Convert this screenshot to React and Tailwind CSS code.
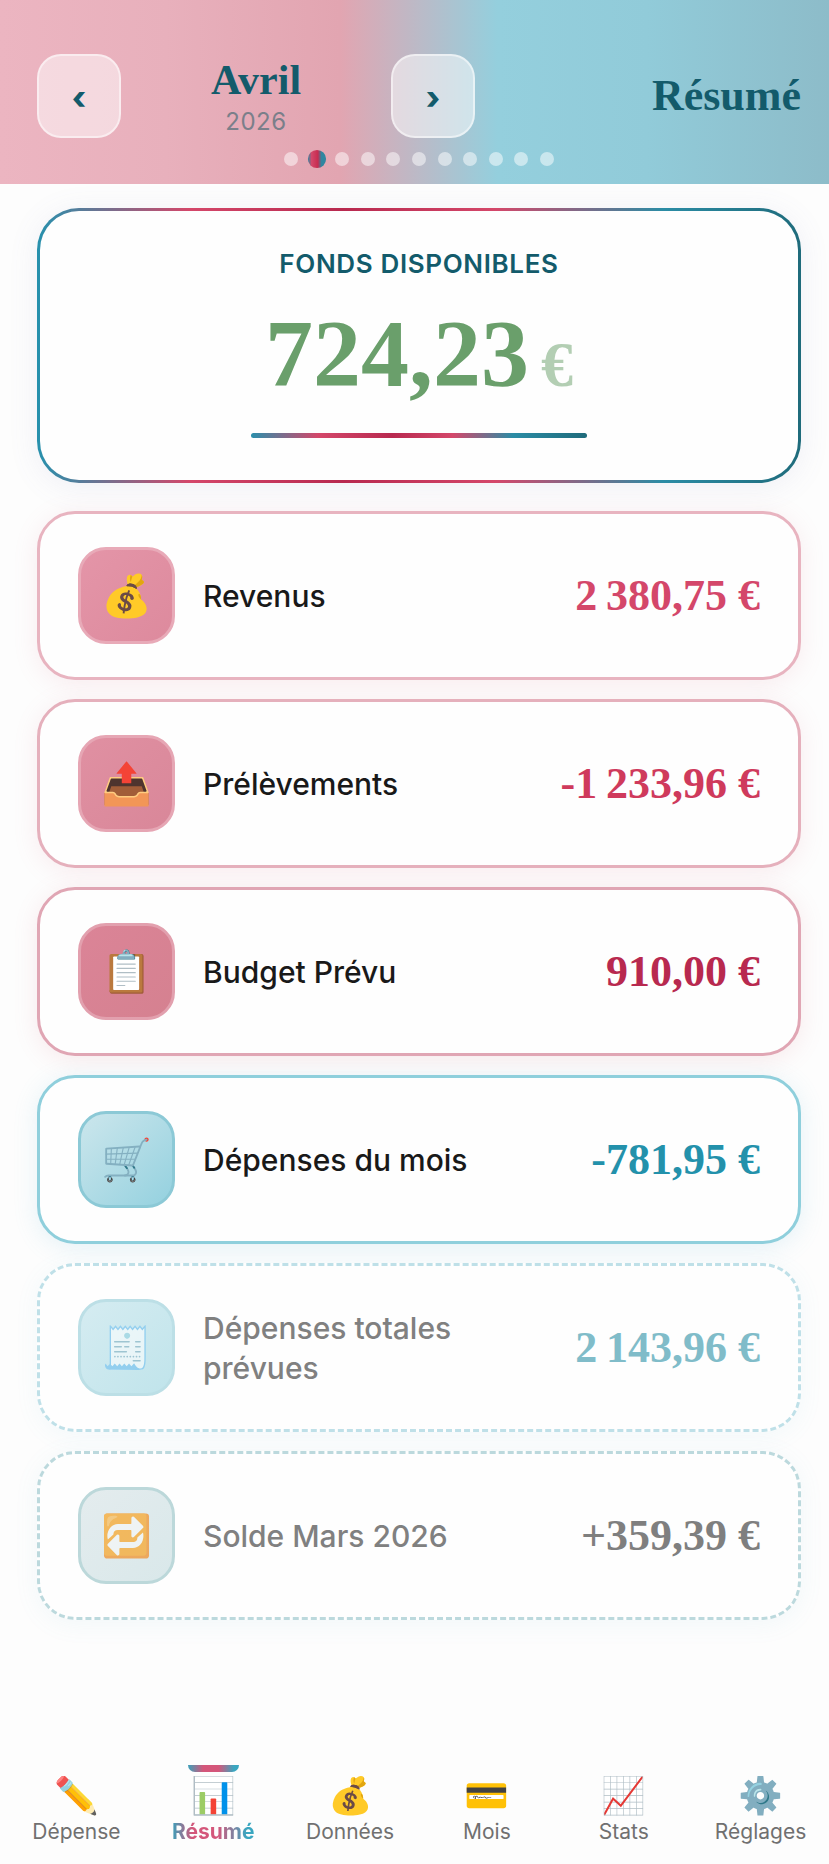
import clsx from 'clsx'

const rows = [
  {
    icon: '💰',
    label: 'Revenus',
    amount: '2\u202f380,75 €',
    card: 'border-[#e8b4c0] shadow-[0_4px_24px_rgba(220,130,150,0.14)]',
    tile: 'border-[#e8aab8] bg-linear-to-br from-[#e495a8] to-[#dd8a9d]',
    color: 'text-[#d4476a]',
  },
  {
    icon: '📤',
    label: 'Prélèvements',
    amount: '-1\u202f233,96 €',
    card: 'border-[#e5b0bc] shadow-[0_4px_24px_rgba(220,130,150,0.14)]',
    tile: 'border-[#e6a6b4] bg-linear-to-br from-[#e090a2] to-[#d98799]',
    color: 'text-[#cf3a5c]',
  },
  {
    icon: '📋',
    label: 'Budget Prévu',
    amount: '910,00 €',
    card: 'border-[#e0a6b4] shadow-[0_4px_24px_rgba(210,110,130,0.14)]',
    tile: 'border-[#e2a0ae] bg-linear-to-br from-[#db8497] to-[#d58190]',
    color: 'text-[#b8294f]',
  },
  {
    icon: '🛒',
    label: 'Dépenses du mois',
    amount: '-781,95 €',
    card: 'border-[#8fcfdc] shadow-[0_4px_24px_rgba(100,180,210,0.16)]',
    tile: 'border-[#8cc9d6] bg-linear-to-br from-[#cbe6ec] to-[#94d1df]',
    color: 'text-[#2391ab]',
  },
  {
    icon: '🧾',
    label: 'Dépenses totales prévues',
    amount: '2\u202f143,96 €',
    card: 'border-dashed border-[#bfe0e8] shadow-[0_4px_24px_rgba(100,180,210,0.07)]',
    tile: 'border-[#bcdfe6] bg-linear-to-br from-[#d5ecf1] to-[#c0e4eb]',
    color: 'text-[#80bcc9]',
    muted: true,
  },
  {
    icon: '🔁',
    label: 'Solde Mars 2026',
    amount: '+359,39 €',
    card: 'border-dashed border-[#bcd9dd] shadow-[0_4px_24px_rgba(100,180,210,0.08)]',
    tile: 'border-[#bcd8da] bg-linear-to-br from-[#e4ecee] to-[#d9e8ea]',
    color: 'text-[#7f7f7f]',
    muted: true,
  },
]

const tabs = [
  { icon: '✏️', label: 'Dépense' },
  { icon: '📊', label: 'Résumé', active: true },
  { icon: '💰', label: 'Données' },
  { icon: '💳', label: 'Mois' },
  { icon: '📈', label: 'Stats' },
  { icon: '⚙️', label: 'Réglages' },
]

const serif = "font-['Liberation_Serif',serif]"

function ArrowButton({ label, children }) {
  return (
    <button
      type="button"
      aria-label={label}
      className="flex size-[84px] items-center justify-center rounded-3xl border-2 border-white/50 bg-white/50 pt-1 text-[32px] font-extrabold text-[#135b6b]"
    >
      {children}
    </button>
  )
}

function Header() {
  return (
    <header className="bg-[linear-gradient(90deg,#ecb5c1_0%,#e8b0bc_20%,#e2a5b1_41%,#94cfdd_60%,#91cbd9_78%,#8dbcc9_100%)] pb-[18px] pl-[37px] pr-7 pt-[54px]">
      <div className="flex items-center">
        <ArrowButton label="Mois précédent">‹</ArrowButton>
        <div className="w-[270px] text-center">
          <p className={clsx(serif, 'text-[42px]/13 font-bold text-[#135b6b]')}>Avril</p>
          <p className="text-2xl/8 tracking-wide text-[#7b7f8a]">2026</p>
        </div>
        <ArrowButton label="Mois suivant">›</ArrowButton>
        <h1 className={clsx(serif, 'ml-auto text-[44px] font-bold text-[#135b6b]')}>Résumé</h1>
      </div>
      <div className="mx-auto mt-3.5 flex w-[270px] justify-between">
        {Array.from({ length: 11 }, (_, i) => (
          <span
            key={i}
            className={clsx(
              'size-3.5 rounded-full',
              i === 1
                ? 'scale-130 bg-[linear-gradient(90deg,#2f86a0,#d4476a_20%,#c72c50_55%,#2f86a0_75%)]'
                : 'bg-white/50'
            )}
          />
        ))}
      </div>
    </header>
  )
}

function Funds() {
  return (
    <section className="rounded-[42px] bg-[linear-gradient(90deg,#2691ad_0%,#d4476a_20%,#b8294f_40%,#d4476a_60%,#2b8ca5_82%,#1f6b7b_100%)] p-[3px] shadow-[0_4px_30px_rgba(120,120,180,0.10)]">
      <div className="flex h-[269px] flex-col items-center rounded-[39px] bg-[#fefefe] pt-[37px]">
        <h2 className="text-[26px]/8 font-semibold uppercase tracking-wide text-[#135b6b]">Fonds disponibles</h2>
        <p className={clsx(serif, 'mt-6 text-[96px]/25 font-bold text-[#6a9f6b]')}>
          724,23
          <span className="ml-3 text-[64px] opacity-50">€</span>
        </p>
        <div className="mt-[18px] h-[5px] w-[336px] rounded-full bg-[linear-gradient(90deg,#2b8fab_0%,#d4476a_20%,#b8294f_42%,#d4476a_60%,#2b8ca5_78%,#1f6b7b_100%)]" />
      </div>
    </section>
  )
}

function Row({ row }) {
  return (
    <li className={clsx('flex items-center rounded-[38px] border-3 bg-[#fefefe] px-[38px] py-[33px]', row.card)}>
      <div
        className={clsx(
          'flex size-[97px] shrink-0 items-center justify-center rounded-[28px] border-3 text-[41px]',
          row.tile
        )}
      >
        <span className={clsx(row.muted && 'opacity-60')}>{row.icon}</span>
      </div>
      <p className={clsx('ml-7 max-w-[300px] text-[30px]/10 font-medium', row.muted ? 'text-[#808080]' : 'text-[#191919]')}>
        {row.label}
      </p>
      <p className={clsx(serif, 'ml-auto whitespace-nowrap text-[44px]/12 font-bold', row.color)}>{row.amount}</p>
    </li>
  )
}

function TabBar() {
  return (
    <nav className="mt-auto grid grid-cols-6 pb-[18px] pl-2">
      {tabs.map((tab) => (
        <a key={tab.label} href="#" className="relative flex flex-col items-center gap-0.5 pt-[9px] text-[#707070]">
          {tab.active && (
            <span className="absolute top-0 h-[7px] w-[51px] rounded-b-full bg-[linear-gradient(90deg,#3aa0ba,#d4567a_30%,#d4567a_60%,#3aa6c0_90%)]" />
          )}
          <span className="flex h-[42px] items-center text-4xl/10">{tab.icon}</span>
          <span
            className={clsx(
              'text-[21px]/7',
              tab.active &&
                'bg-[linear-gradient(90deg,#3aa0ba,#d4567a_25%,#d4567a_55%,#3aa6c0_90%)] bg-clip-text font-bold text-transparent'
            )}
          >
            {tab.label}
          </span>
        </a>
      ))}
    </nav>
  )
}

export default function App() {
  return (
    <div className="flex min-h-screen flex-col bg-[#fdfdfd] font-['Inter',sans-serif]">
      <Header />
      <main className="pl-[37px] pr-7 pt-6">
        <Funds />
        <ul className="mt-7 flex flex-col gap-[19px]">
          {rows.map((row) => (
            <Row key={row.label} row={row} />
          ))}
        </ul>
      </main>
      <TabBar />
    </div>
  )
}
